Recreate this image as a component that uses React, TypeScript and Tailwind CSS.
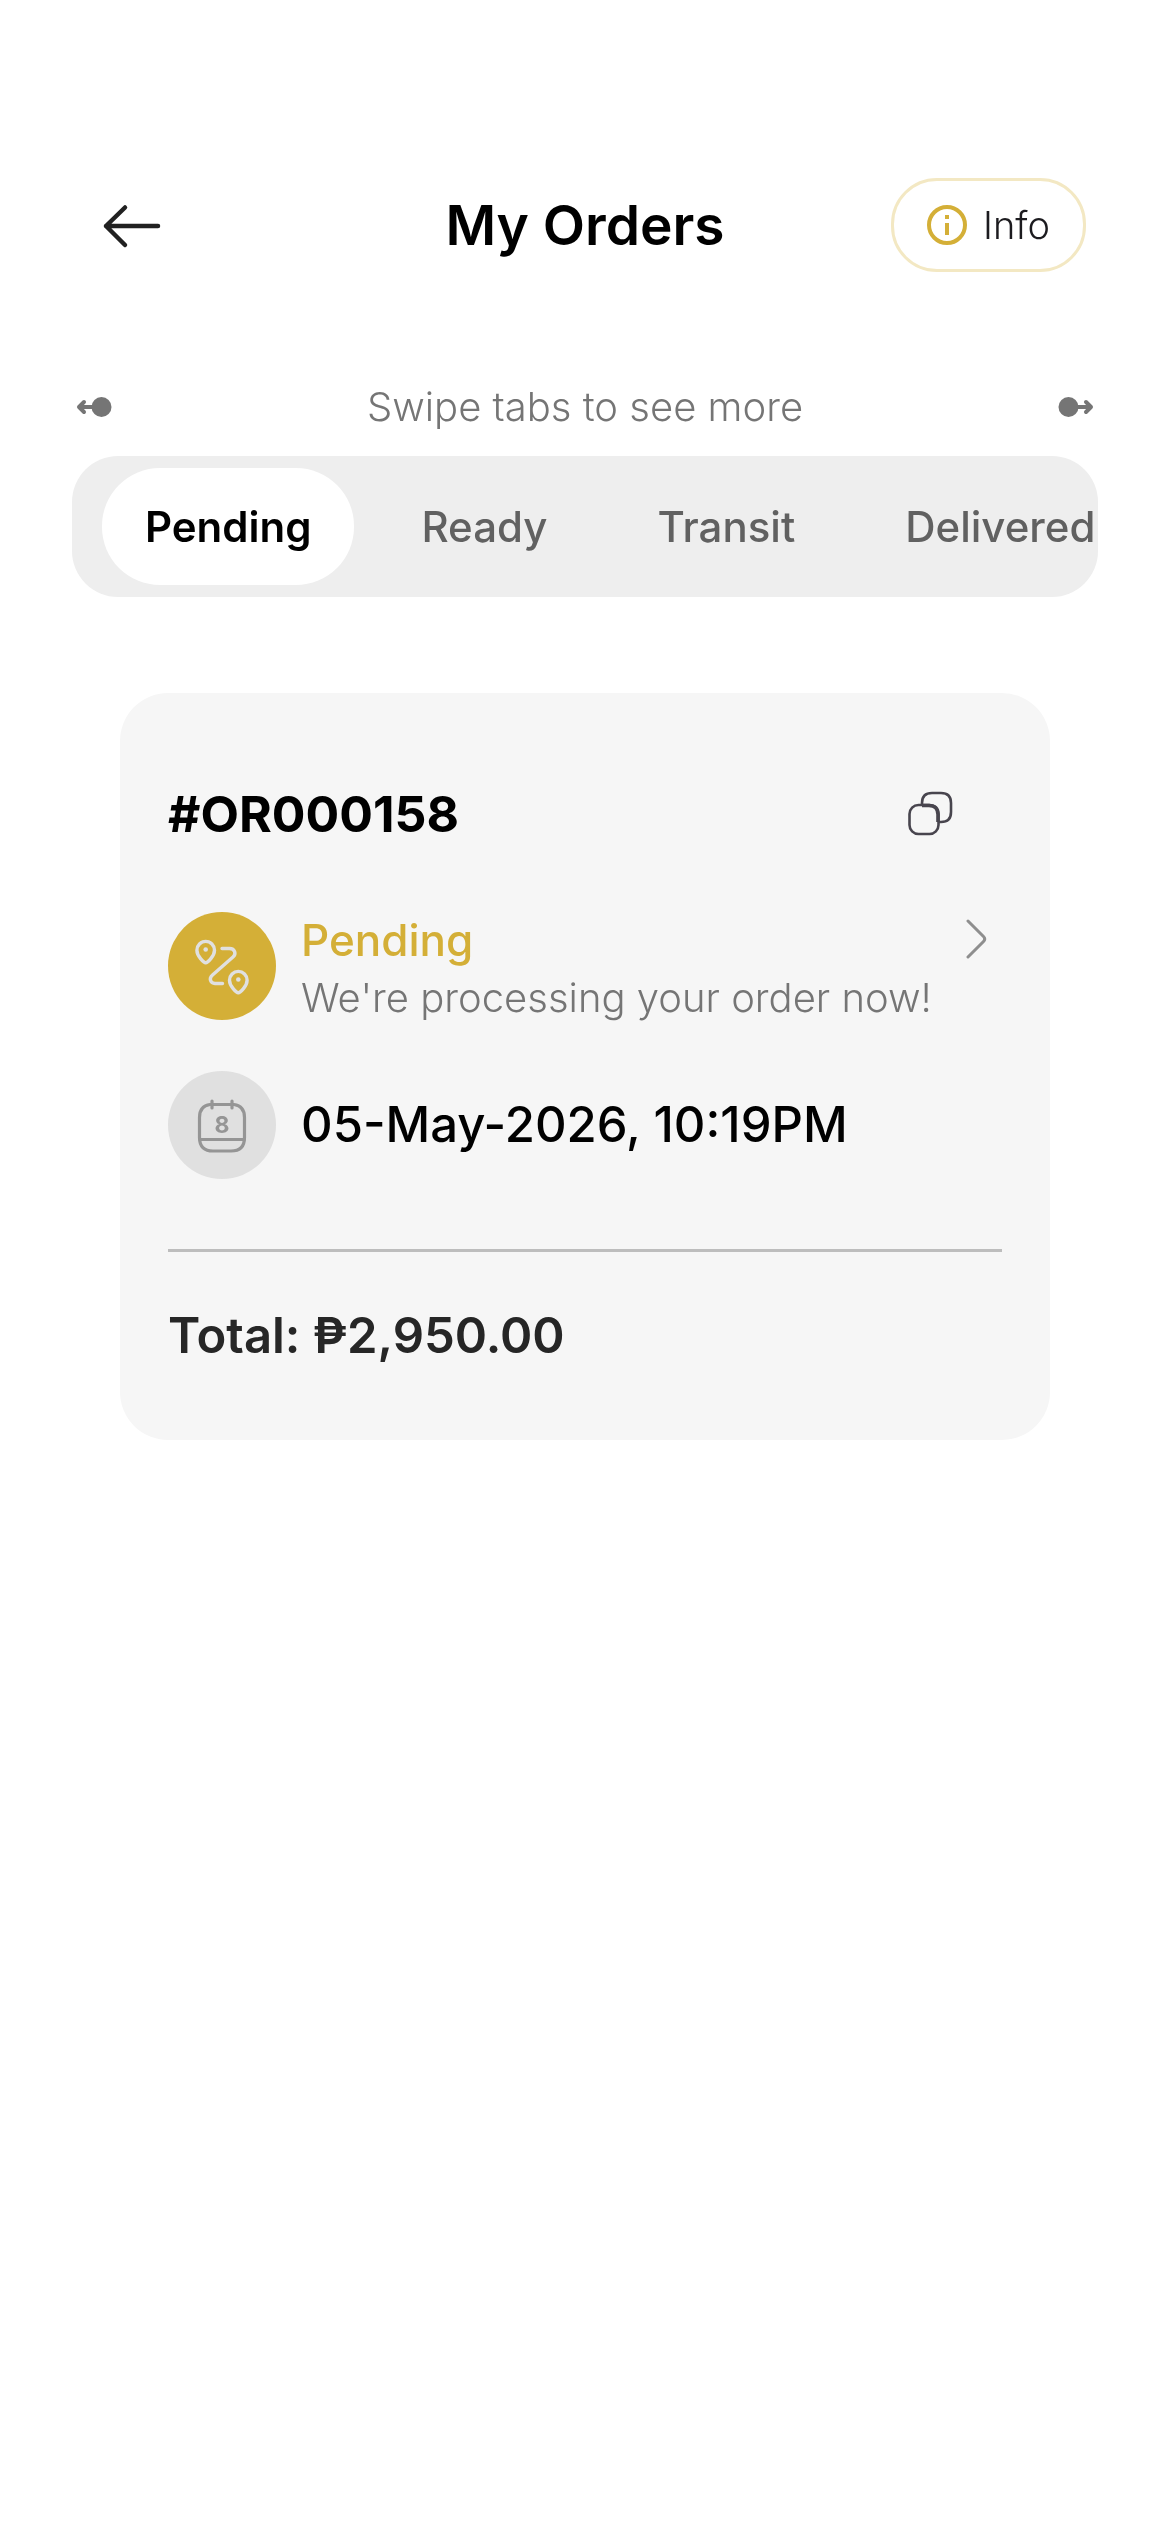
import { useState } from 'react';
import clsx from 'clsx';

const TABS = ['Pending', 'Ready', 'Transit', 'Delivered'];

const order = {
  id: '#OR000158',
  status: 'Pending',
  message: "We're processing your order now!",
  date: '05-May-2026, 10:19PM',
  total: '₱2,950.00',
};

function BackIcon() {
  return (
    <svg className="h-[72px] w-24" viewBox="0 0 96 72" fill="none" stroke="#212121" strokeWidth="4.500" strokeLinecap="round" strokeLinejoin="round">
      <path d="M41 18.500 22 37l19 19M22 37h52" />
    </svg>
  );
}

function InfoIcon() {
  return (
    <svg className="size-10" viewBox="0 0 40 40" fill="none" stroke="#d4af37" strokeWidth="4">
      <circle cx="20" cy="20" r="18" />
      <path d="M20 10v4M20 18v12" />
    </svg>
  );
}

function SwipeIcon({ flipped = false }: { flipped?: boolean }) {
  return (
    <svg className={clsx('h-6 w-9', flipped && '-scale-x-100')} viewBox="0 0 36 24" fill="none" stroke="#757575" strokeWidth="4" strokeLinecap="round" strokeLinejoin="round">
      <path d="M8 7 3 12l5 5M3 12h17" />
      <circle cx="25.500" cy="12" r="10" fill="#757575" stroke="none" />
    </svg>
  );
}

function CopyIcon() {
  return (
    <svg className="size-[72px]" viewBox="0 0 72 72" fill="none" stroke="#48454e" strokeWidth="2.600">
      <rect x="15.500" y="27" width="29" height="29" rx="9" />
      <path d="M28 27v-2q0-10 10-10h9q10 0 10 10v9q0 10-10 10h-2.500" />
      <path d="M28 27.500h7q9 0 9 9V44" strokeWidth="3.600" />
    </svg>
  );
}

function ChevronIcon() {
  return (
    <svg className="size-[52px]" viewBox="0 0 52 52" fill="none" stroke="#8e8e8e" strokeWidth="3" strokeLinecap="round">
      <path d="m18 7 15.500 15.500q2.400 2.500 0 5L18 43" />
    </svg>
  );
}

function RouteIcon() {
  return (
    <svg className="size-[60px]" viewBox="0 0 60 60" fill="none" stroke="#e0e0e0" strokeWidth="3.400" strokeLinecap="round" strokeLinejoin="round">
      <path d="M13.700 26.800c-2 0-8.800-6.800-8.800-12.600a8.800 8.800 0 0 1 17.600 0c0 5.800-6.800 12.600-8.800 12.600Z" />
      <path d="M46.300 56.800c-2 0-8.800-6.800-8.800-12.600a8.800 8.800 0 0 1 17.600 0c0 5.800-6.800 12.600-8.800 12.600Z" />
      <path d="M30 12.500h7.500c5.500 0 7 5.500 3.500 8.500L20.500 39c-4 3.500-2 8.500 2.500 8.500h7.500" />
      <circle cx="13.700" cy="13.500" r="2.300" fill="#e0e0e0" stroke="none" />
      <circle cx="46.300" cy="43.500" r="2.300" fill="#e0e0e0" stroke="none" />
    </svg>
  );
}

function CalendarIcon() {
  return (
    <svg className="size-[60px]" viewBox="0 0 60 60" fill="none" stroke="#959595" strokeWidth="3.200" strokeLinecap="round">
      <path d="M18 9.500h24c8 1 10.500 6 10.500 13v20c0 9.500-5 13.500-13.500 13.500H21c-8.500 0-13.500-4-13.500-13.500v-20c0-7 2.500-12 10.500-13Z" />
      <path d="M8 44.500h44M20 6v7M40 6v7" />
      <text x="30" y="38" textAnchor="middle" fill="#959595" stroke="none" className="text-[23px] font-bold">8</text>
    </svg>
  );
}

export default function App() {
  const [activeTab, setActiveTab] = useState('Pending');

  return (
    <div className="min-h-screen bg-white pt-[178px] font-['Inter','Noto_Sans',sans-serif] text-black">
      {/* Header */}
      <header className="grid grid-cols-[1fr_auto_1fr] items-center px-[84px]">
        <button aria-label="Back" className="justify-self-start">
          <BackIcon />
        </button>
        <h1 className="text-[55px] leading-[60px] font-semibold">My Orders</h1>
        <button className="flex h-[94px] items-center gap-4 justify-self-end rounded-[46px] border-3 border-[#f3e8c3] px-[33px] text-[38px] leading-[48px] font-light text-[#1c1b1f]">
          <InfoIcon />
          Info
        </button>
      </header>

      {/* Status tabs */}
      <section className="mt-[111px] px-[72px]">
        <div className="flex items-center justify-between px-1">
          <SwipeIcon />
          <p className="text-[40px] leading-[48px] font-light text-[#757575]">Swipe tabs to see more</p>
          <SwipeIcon flipped />
        </div>
        <nav role="tablist" className="mt-[25px] flex gap-6 overflow-x-auto rounded-[46px] bg-[#eeeeee] px-[30px] py-3 [scrollbar-width:none]">
          {TABS.map((tab) => (
            <button
              key={tab}
              role="tab"
              aria-selected={tab === activeTab}
              onClick={() => setActiveTab(tab)}
              className={clsx(
                'h-[117px] shrink-0 rounded-[58px] px-[43px] text-[42px] leading-[48px]',
                tab === activeTab ? 'bg-white font-semibold text-black' : 'font-medium text-[#616161]',
              )}
            >
              {tab}
            </button>
          ))}
        </nav>
      </section>

      {/* Order card */}
      <main className="mt-24 px-[120px]">
        <article className="rounded-[48px] bg-[#f6f6f6] px-12 pt-[85px] pb-[74px]">
          <div className="flex items-center justify-between pr-9">
            <h2 className="text-[50px] leading-[60px] font-bold">{order.id}</h2>
            <button aria-label="Copy order number">
              <CopyIcon />
            </button>
          </div>

          <div className="mt-[62px] flex gap-[25px]">
            <div className="flex size-[108px] shrink-0 items-center justify-center rounded-full bg-[#d4af37]">
              <RouteIcon />
            </div>
            <div className="flex-1">
              <div className="flex h-14 items-center justify-between">
                <p className="text-[44px] leading-[56px] font-medium text-[#d4af37]">{order.status}</p>
                <button aria-label="View order">
                  <ChevronIcon />
                </button>
              </div>
              <p className="text-[40px] leading-[60px] font-light text-[#757575]">{order.message}</p>
            </div>
          </div>

          <div className="mt-[43px] flex items-center gap-[25px]">
            <div className="flex size-[108px] shrink-0 items-center justify-center rounded-full bg-[#e0e0e0]">
              <CalendarIcon />
            </div>
            <p className="text-[49px] leading-[60px] font-medium">{order.date}</p>
          </div>

          <hr className="mt-[70px] border-t-3 border-[#bdbdbd]" />

          <p className="mt-[54px] text-[49px] leading-[60px] font-semibold text-[#262626]">Total: {order.total}</p>
        </article>
      </main>
    </div>
  );
}
